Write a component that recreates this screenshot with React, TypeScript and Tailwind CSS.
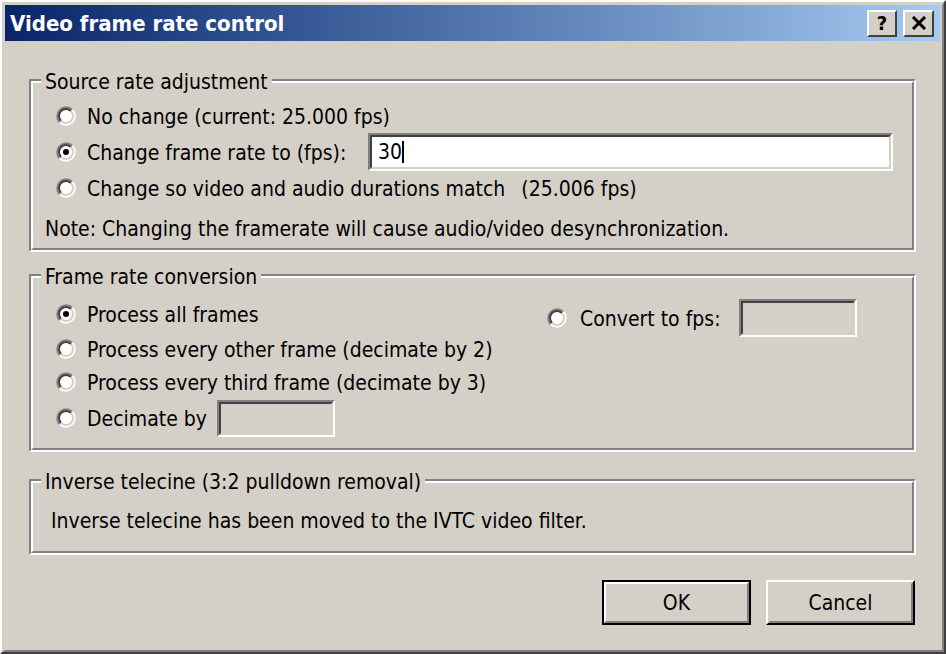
import { useState } from 'react';

const font = { fontFamily: '"DejaVu Sans Condensed", "DejaVu Sans", sans-serif' };

function Radio({ checked }: { checked?: boolean }) {
  return (
    <svg width="20" height="20" viewBox="0 0 20 20" className="shrink-0">
      <circle cx="10" cy="10" r="9" fill="#ffffff" />
      <path d="M3.64 16.36 A9 9 0 0 1 16.36 3.64" stroke="#808080" strokeWidth="2" fill="none" />
      <path d="M16.36 3.64 A9 9 0 0 1 3.64 16.36" stroke="#ffffff" strokeWidth="2" fill="none" />
      <path d="M5.05 14.95 A7 7 0 0 1 14.95 5.05" stroke="#404040" strokeWidth="2" fill="none" />
      <path d="M14.95 5.05 A7 7 0 0 1 5.05 14.95" stroke="#d4d0c8" strokeWidth="2" fill="none" />
      {checked && <circle cx="10" cy="10" r="3" fill="#000000" />}
    </svg>
  );
}

function GroupBox({ label, className, children }: { label: string; className?: string; children: React.ReactNode }) {
  return (
    <div className={`relative border-2 border-t-[#808080] border-l-[#808080] border-r-white border-b-white ${className ?? ''}`}>
      <div className="border-2 border-t-white border-l-white border-r-[#808080] border-b-[#808080] h-full">
        {children}
      </div>
      <span className="absolute left-[10px] top-[-13px] bg-[#d4d0c8] px-[4px] pt-[2px] leading-[24px]">{label}</span>
    </div>
  );
}

function Field({ className, disabled, children }: { className?: string; disabled?: boolean; children?: React.ReactNode }) {
  return (
    <div className={`border-2 border-t-[#808080] border-l-[#808080] border-r-white border-b-white ${className ?? ''}`}>
      <div
        className={`h-full border-2 border-t-[#404040] border-l-[#404040] border-r-[#d4d0c8] border-b-[#d4d0c8] flex items-center px-[6px] ${
          disabled ? 'bg-[#d4d0c8]' : 'bg-white'
        }`}
      >
        {children}
      </div>
    </div>
  );
}

function Option({ checked, label, className }: { checked?: boolean; label: React.ReactNode; className?: string }) {
  return (
    <div className={`flex items-center gap-[11px] ${className ?? ''}`}>
      <Radio checked={checked} />
      <span className="whitespace-nowrap pt-[4px]">{label}</span>
    </div>
  );
}

export default function App() {
  const [fps] = useState('30');

  return (
    <div
      className="w-[946px] h-[654px] bg-[#d4d0c8] text-black text-[21px] border-2 border-t-white border-l-white border-r-[#404040] border-b-[#404040]"
      style={font}
    >
      <div className="h-full border-t-[3px] border-l-[3px] border-t-[#d4d0c8] border-l-[#d4d0c8] border-r-2 border-b-2 border-r-[#808080] border-b-[#808080] pr-[2px] flex flex-col">
        {/* Title bar */}
        <div className="h-[36px] bg-linear-to-r from-[#0a246a] to-[#a6caf0] flex items-center pl-[5px] pr-[6px]">
          <span className="text-white font-bold text-[22px] leading-none pt-[2px]">Video frame rate control</span>
          <div className="ml-auto flex gap-[6px]">
            <div className="w-[30px] h-[27px] bg-[#d4d0c8] border-2 border-t-white border-l-white border-r-[#404040] border-b-[#404040] flex items-center justify-center">
              <span className="font-bold text-[20px] leading-none">?</span>
            </div>
            <div className="w-[31px] h-[27px] bg-[#d4d0c8] border-2 border-t-white border-l-white border-r-[#404040] border-b-[#404040] flex items-center justify-center">
              <svg width="16" height="14" viewBox="0 0 16 14">
                <path d="M2 1 L14 13 M14 1 L2 13" stroke="#000" strokeWidth="3" />
              </svg>
            </div>
          </div>
        </div>

        <div className="px-[24px] flex flex-col">
          {/* Source rate adjustment */}
          <GroupBox label="Source rate adjustment" className="mt-[38px] h-[173px]">
            <div className="pt-[15px] pr-[19px]">
              <Option checked={false} label="No change (current: 25.000 fps)" className="h-[36px] pl-[23px]" />
              <div className="h-[36px] pl-[23px] flex items-center">
                <Option checked label="Change frame rate to (fps):" />
                <Field className="ml-auto w-[525px] h-[38px]">
                  <span className="pt-[2px]">{fps}</span>
                  <span className="w-[2px] h-[22px] bg-black" />
                </Field>
              </div>
              <Option
                label={
                  <>
                    Change so video and audio durations match<span className="ml-[16px]">(25.006 fps)</span>
                  </>
                }
                className="h-[36px] pl-[23px]"
              />
              <div className="mt-[4px] h-[36px] pl-[12px] pt-[4px] flex items-center">
                Note: Changing the framerate will cause audio/video desynchronization.
              </div>
            </div>
          </GroupBox>

          {/* Frame rate conversion */}
          <GroupBox label="Frame rate conversion" className="mt-[22px] h-[178px]">
            <div className="flex">
              <div className="w-[514px] pl-[23px] pt-[18px]">
                <Option checked label="Process all frames" className="h-[36px]" />
                <Option label="Process every other frame (decimate by 2)" className="h-[34px]" />
                <Option label="Process every third frame (decimate by 3)" className="h-[32px]" />
                <div className="h-[40px] flex items-center">
                  <Option label="Decimate by" />
                  <Field disabled className="ml-[10px] w-[118px] h-[37px]" />
                </div>
              </div>
              <div className="pt-[22px]">
                <div className="h-[36px] w-[310px] flex items-center">
                  <div className="flex items-center gap-[13px]">
                    <Radio />
                    <span className="whitespace-nowrap pt-[4px]">Convert to fps:</span>
                  </div>
                  <Field disabled className="ml-auto w-[118px] h-[38px]" />
                </div>
              </div>
            </div>
          </GroupBox>

          {/* Inverse telecine */}
          <GroupBox label="Inverse telecine (3:2 pulldown removal)" className="mt-[27px] h-[76px]">
            <div className="pt-[23px] pl-[18px] h-[32px] box-content flex items-center">
              Inverse telecine has been moved to the IVTC video filter.
            </div>
          </GroupBox>

          {/* Buttons */}
          <div className="mt-[25px] mr-[1px] flex justify-end gap-[15px]">
            <div className="w-[149px] h-[45px] border-2 border-black">
              <div className="h-full pt-[2px] bg-[#d4d0c8] border-2 border-t-white border-l-white border-r-[#808080] border-b-[#808080] flex items-center justify-center">
                OK
              </div>
            </div>
            <div className="w-[149px] h-[45px] border-2 border-t-white border-l-white border-r-black border-b-black">
              <div className="h-full pt-[2px] bg-[#d4d0c8] border-2 border-t-[#d4d0c8] border-l-[#d4d0c8] border-r-[#808080] border-b-[#808080] flex items-center justify-center">
                Cancel
              </div>
            </div>
          </div>
        </div>
      </div>
    </div>
  );
}
